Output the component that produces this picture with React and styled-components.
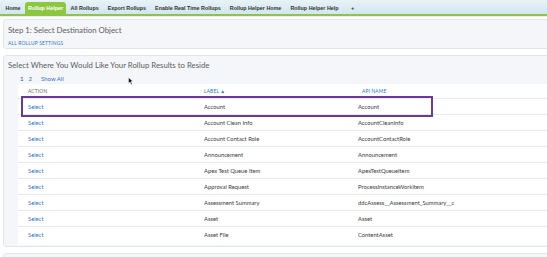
import React from "react";
import styled, { createGlobalStyle } from "styled-components";

const Global = createGlobalStyle`
  html, body { margin: 0; padding: 0; background: #ffffff; overflow: hidden; }
  body { width: 547px; height: 257px; font-family: "Lato", "Open Sans", Arial, sans-serif; }
  #root { width: 547px; height: 257px; overflow: hidden; position: relative; }
`;

const TabBar = styled.div`
  display: flex;
  align-items: flex-end;
  height: 14px;
  padding-left: 1px;
  background: linear-gradient(#e8f3f7, #d2e6ee);
  border-bottom: 2px solid #8dc63f;
  box-shadow: 0 1px 0 #e6eef1;
`;

const Tab = styled.div`
  height: 12px;
  line-height: 12px;
  padding: 0 ${(p) => (p.$pad ? p.$pad : 4.5)}px;
  font-family: "Liberation Sans", Arial, sans-serif;
  font-weight: bold;
  font-size: 5.4px;
  color: ${(p) => (p.$active ? "#ffffff" : "#333333")};
  background: ${(p) => (p.$active ? "#8dc63f" : "transparent")};
  border-radius: 3px 3px 0 0;
  white-space: nowrap;
`;

const Content = styled.div`
  width: 600px;
  padding: 3px 3px 0 3px;
  display: flex;
  flex-direction: column;
  gap: 6px;
`;

const Panel = styled.div`
  background: #f4f6f9;
  border: 1px solid #e2e6ec;
  border-radius: 3px;
  padding: ${(p) => p.$pad || "0"};
  height: ${(p) => (p.$h ? p.$h + "px" : "auto")};
  box-sizing: border-box;
  position: relative;
`;

const Title = styled.div`
  font-size: 7.8px;
  font-weight: 400;
  color: #5c5c5c;
  line-height: 10px;
  padding-left: 4px;
`;

const SmallLink = styled.div`
  font-size: 4.9px;
  color: #2c76c9;
  text-transform: uppercase;
  letter-spacing: 0.2px;
  padding-left: 4px;
  margin-top: 5px;
  line-height: 6px;
`;

const Pager = styled.div`
  display: flex;
  gap: 5px;
  padding-left: 16px;
  margin-top: 4px;
  height: 9px;
  align-items: center;
  font-size: 6px;
  color: #2c76c9;
`;

const PagerItem = styled.span`
  margin-left: ${(p) => p.$ml || 0}px;
  color: ${(p) => (p.$current ? "#1d4f9a" : "#2c76c9")};
`;

const Table = styled.div`
  margin-left: 14px;
  margin-top: 1px;
  background: #ffffff;
  padding-bottom: 3px;
`;

const Row = styled.div`
  display: grid;
  grid-template-columns: 176px 154px 1fr;
  height: ${(p) => (p.$header ? 14 : 16)}px;
  align-items: center;
  border-top: ${(p) => (p.$header ? "none" : "1px solid #e8eaee")};
  box-sizing: border-box;
  font-size: 5.8px;
  color: #3a3a3a;
`;

const Cell = styled.div`
  padding-left: 10px;
  white-space: nowrap;
`;

const HeadCell = styled(Cell)`
  font-size: 4.8px;
  letter-spacing: 0.2px;
  color: ${(p) => (p.$sortable ? "#2c76c9" : "#666666")};
  padding-left: ${(p) => p.$pl || 10}px;
`;

const SelectLink = styled.span`
  color: #2c76c9;
`;

const Highlight = styled.div`
  position: absolute;
  left: 17px;
  top: 40px;
  width: 412px;
  height: 21px;
  border: 2px solid #6b3b93;
  box-sizing: border-box;
  pointer-events: none;
`;

const Cursor = styled.svg`
  position: absolute;
  left: 124px;
  top: 21px;
`;

const rows = [
  ["Account", "Account"],
  ["Account Clean Info", "AccountCleanInfo"],
  ["Account Contact Role", "AccountContactRole"],
  ["Announcement", "Announcement"],
  ["Apex Test Queue Item", "ApexTestQueueItem"],
  ["Approval Request", "ProcessInstanceWorkitem"],
  ["Assessment Summary", "ddcAssess__Assessment_Summary__c"],
  ["Asset", "Asset"],
  ["Asset File", "ContentAsset"],
];

const tabs = [
  "Home",
  "Rollup Helper",
  "All Rollups",
  "Export Rollups",
  "Enable Real Time Rollups",
  "Rollup Helper Home",
  "Rollup Helper Help",
];

export default function App() {
  return (
    <>
      <Global />
      <TabBar>
        {tabs.map((t, i) => (
          <Tab key={t} $active={i === 1} $pad={i === 1 ? 3 : 4.5}>
            {t}
          </Tab>
        ))}
        <Tab $pad={8}>+</Tab>
      </TabBar>
      <Content>
        <Panel $h={30} $pad="5px 0 0 0">
          <Title>Step 1: Select Destination Object</Title>
          <SmallLink>All Rollup Settings</SmallLink>
        </Panel>
        <Panel $h={192} $pad="4px 0 0 0">
          <Title>Select Where You Would Like Your Rollup Results to Reside</Title>
          <Pager>
            <PagerItem $current>1</PagerItem>
            <PagerItem>2</PagerItem>
            <PagerItem $ml={4}>Show All</PagerItem>
          </Pager>
          <Table>
            <Row $header>
              <HeadCell>ACTION</HeadCell>
              <HeadCell $sortable>LABEL ▲</HeadCell>
              <HeadCell $sortable $pl={14}>API NAME</HeadCell>
            </Row>
            {rows.map(([label, api]) => (
              <Row key={api}>
                <Cell>
                  <SelectLink>Select</SelectLink>
                </Cell>
                <Cell>{label}</Cell>
                <Cell>{api}</Cell>
              </Row>
            ))}
          </Table>
          <Highlight />
          <Cursor width="5" height="8" viewBox="0 0 10 16">
            <path d="M1 1 L1 13 L4 10 L6.5 15 L8.5 14 L6 9 L10 9 Z" fill="#111" stroke="#fff" strokeWidth="1" />
          </Cursor>
        </Panel>
        <Panel $h={20} />
      </Content>
    </>
  );
}
